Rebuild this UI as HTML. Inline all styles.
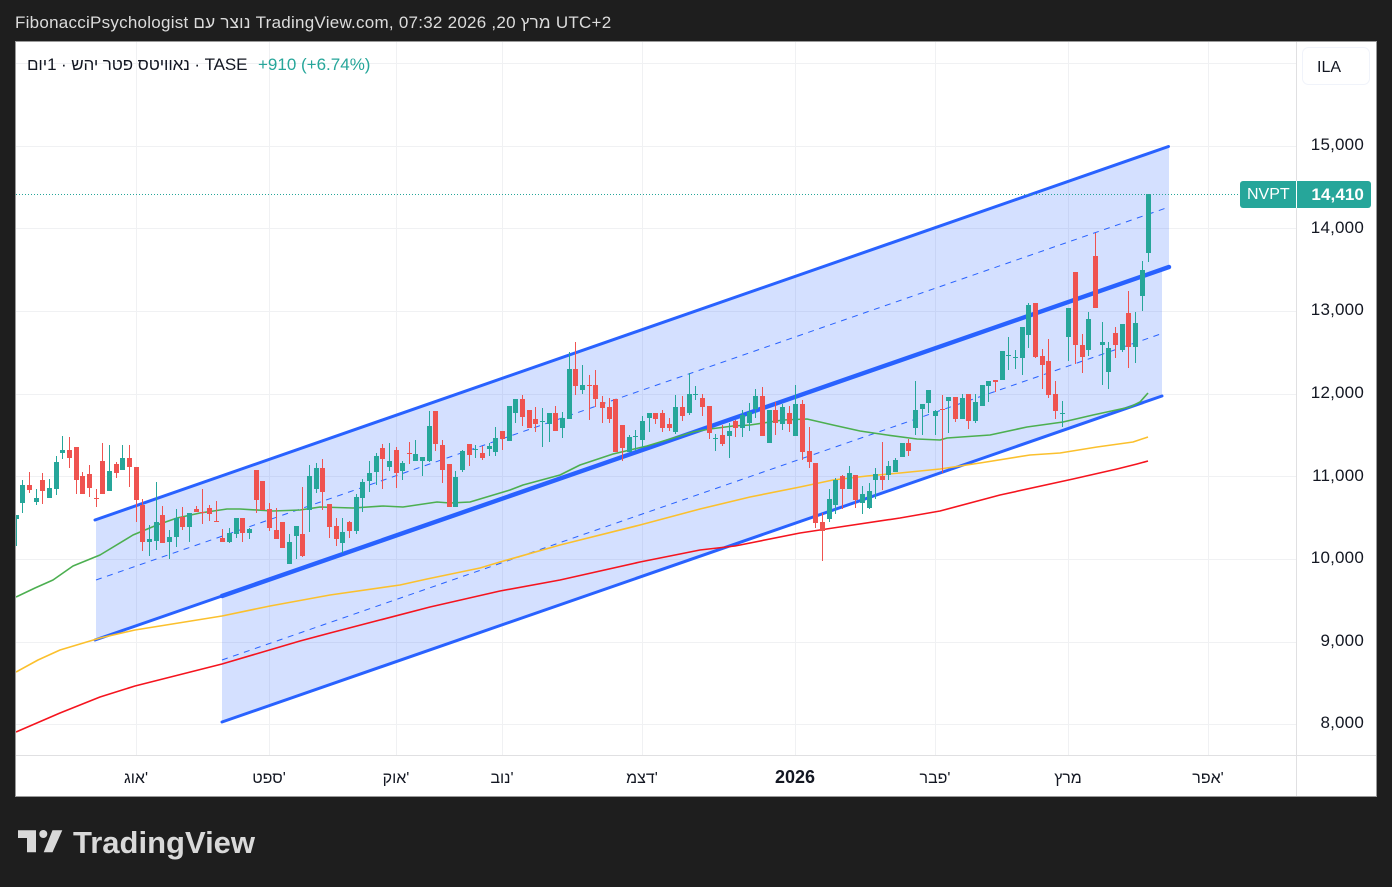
<!DOCTYPE html>
<html lang="he"><head><meta charset="utf-8"><title>NVPT</title>
<style>
html,body{margin:0;padding:0;background:#1e1e1e;width:1392px;height:887px;overflow:hidden}
body{position:relative;font-family:"Liberation Sans","Noto Sans CJK JP",sans-serif}
.t{position:absolute;white-space:pre;direction:ltr}
#chart{position:absolute;left:15px;top:41px;width:1362px;height:756px;background:#fff;box-sizing:border-box;border:1px solid #9a9a9a}
svg{position:absolute;left:0;top:0}
.p{position:absolute;right:28px;width:70px;text-align:right;font-size:17px;letter-spacing:.2px;color:#131722;line-height:18px}
.x{position:absolute;top:770px;width:80px;text-align:center;font-size:16px;color:#131722;line-height:18px;direction:ltr}
</style></head><body>
<div id="chart"></div>
<svg width="1392" height="887" viewBox="0 0 1392 887">
<defs><clipPath id="c"><rect x="16" y="42" width="1280" height="713"/></clipPath></defs>
<g stroke="#f0f1f3" stroke-width="1" shape-rendering="crispEdges" fill="none">
<path d="M16 63.5H1296M16 146.5H1296M16 228.5H1296M16 311.5H1296M16 394.5H1296M16 476.5H1296M16 559.5H1296M16 642.5H1296M16 724.5H1296"/>
<path d="M136.5 42V755M269.5 42V755M396.5 42V755M502.5 42V755M642.5 42V755M795.5 42V755M935.5 42V755M1068.5 42V755M1208.5 42V755"/>
</g>
<path d="M1296.5 42V796M16 755.5H1376" stroke="#e0e0e2" fill="none" shape-rendering="crispEdges"/>
<g clip-path="url(#c)">
<path d="M96 520L1169 147V267L96 640Z" fill="#2962ff" fill-opacity=".2"/>
<path d="M222 596L1162 270V396L222 722Z" fill="#2962ff" fill-opacity=".2"/>
<g fill="none" stroke="#2962ff">
<path d="M96 580L1169 207" stroke-width="1" stroke-dasharray="6 5.6"/>
<path d="M222 660L1162 333.5" stroke-width="1" stroke-dasharray="6 5.6"/>
<path d="M95 520L1168.5 146.5" stroke-width="3" stroke-linecap="round"/>
<path d="M95 640L222 596" stroke-width="3" stroke-linecap="round"/>
<path d="M222 596L1169 267" stroke-width="4.4" stroke-linecap="round"/>
<path d="M222 722L1162 396" stroke-width="3" stroke-linecap="round"/>
</g>
<g fill="none" stroke-width="1.6" stroke-linejoin="round">
<path stroke="#4caf50" d="M16 597L35 588L53 580L73 566L100 555L133 535L157 525L177 518L200 513L227 509L240 509L273 511L300 510L320 507L353 508L383 506L403 507L437 502L450 503L470 502L480 499L510 490L523 485L560 475L580 465L613 454L647 446L670 439L693 432L710 429L733 426L750 425L783 420L807 419L833 425L860 431L887 435L917 439L940 440L947 438L990 435L1027 427L1063 422L1093 415L1130 407L1140 402L1148 393"/>
<path stroke="#fbc02d" d="M16 672L38 660L60 650L100 638L135 630L222 616L270 606L330 595L400 585L427 579L480 568L500 562L560 545L640 525L700 509L750 497L800 487L833 480L867 476L900 473L940 469L980 463L1030 455L1060 453L1097 447L1133 442L1148 437"/>
<path stroke="#f5141e" d="M16 732L60 713L100 697L135 686L222 664L300 641L330 633L430 607L500 591L560 580L640 562L700 550L735 546L800 533L833 528L900 518L940 511L1000 495L1073 479L1117 469L1137 464L1148 461"/>
</g>
<g fill="none" shape-rendering="crispEdges">
<path stroke="#26a69a" stroke-width="1" d="M16.5 515V546M22.5 480V513M36.5 489V505M49.5 479V498M56.5 456V495M62.5 436V459M109.5 445V491M122.5 445V470M149.5 525V556M156.5 482V550M169.5 530V559M176.5 509V547M189.5 513V542M229.5 528V543M236.5 518V538M249.5 528V539M289.5 534V564M296.5 526V559M309.5 465V532M316.5 463V493M342.5 518V553M356.5 494V534M362.5 479V512M369.5 461V492M376.5 453V485M389.5 443V471M402.5 461V480M415.5 440V461M422.5 457V476M429.5 411V462M455.5 471V507M462.5 450V472M475.5 445V458M489.5 443V456M495.5 427V456M509.5 406V441M515.5 399V423M542.5 408V447M549.5 413V442M562.5 412V438M569.5 352V419M582.5 365V394M629.5 435V452M635.5 430V451M642.5 416V447M649.5 413V432M675.5 395V434M689.5 373V415M695.5 386V400M715.5 434V451M729.5 423V458M742.5 410V437M749.5 403V431M755.5 389V418M769.5 410V443M782.5 404V430M795.5 385V436M829.5 489V522M835.5 478V514M849.5 466V489M862.5 486V514M869.5 483V509M875.5 468V499M888.5 461V480M895.5 458V472M902.5 443V457M915.5 381V435M922.5 404V435M928.5 390V413M935.5 410V435M948.5 397V433M962.5 394V419M975.5 394V423M982.5 385V406M988.5 381V402M1002.5 351V380M1008.5 337V370M1015.5 350V369M1022.5 327V375M1028.5 303V348M1062.5 401V427M1068.5 308V361M1088.5 312V356M1102.5 322V385M1108.5 342V389M1122.5 324V352M1135.5 312V363M1142.5 261V311M1148.5 194V262"/>
<path stroke="#26a69a" stroke-width="5" d="M16.5 515V519M22.5 485V503M36.5 498V502M49.5 488V498M56.5 462V489M62.5 450V453M109.5 471V491M122.5 458V470M149.5 539V542M156.5 522V541M169.5 537V542M176.5 518V537M189.5 513V527M229.5 533V542M236.5 518V534M249.5 529V533M289.5 542V564M296.5 526V536M309.5 476V510M316.5 468V489M342.5 532V543M356.5 497V531M362.5 482V498M369.5 473V481M376.5 456V472M389.5 461V467M402.5 463V471M415.5 454V461M422.5 457V461M429.5 426V461M455.5 477V507M462.5 451V470M475.5 449V450M489.5 446V449M495.5 438V452M509.5 406V441M515.5 399V413M542.5 421V422M549.5 413V424M562.5 418V428M569.5 369V419M582.5 385V390M629.5 437V452M635.5 436V437M642.5 421V440M649.5 413V418M675.5 407V432M689.5 394V413M695.5 394V395M715.5 438V439M729.5 431V436M742.5 415V428M749.5 412V423M755.5 396V409M769.5 410V443M782.5 407V424M795.5 404V436M829.5 499V519M835.5 480V505M849.5 473V489M862.5 494V503M869.5 491V508M875.5 474V480M888.5 466V475M895.5 460V472M902.5 443V457M915.5 410V428M922.5 404V409M928.5 390V403M935.5 411V416M948.5 397V401M962.5 398V419M975.5 402V421M982.5 385V406M988.5 381V386M1002.5 351V380M1008.5 355V356M1015.5 357V358M1022.5 327V358M1028.5 305V335M1062.5 413V414M1068.5 308V337M1088.5 319V350M1102.5 342V345M1108.5 348V372M1122.5 324V350M1135.5 323V347M1142.5 270V296M1148.5 194V253"/>
<path stroke="#ef5350" stroke-width="1" d="M29.5 472V493M42.5 473V504M69.5 437V468M76.5 447V494M82.5 472V494M89.5 465V497M96.5 489V507M102.5 443V494M116.5 462V478M129.5 445V487M136.5 467V522M142.5 499V551M162.5 506V543M182.5 507V530M196.5 506V512M202.5 489V524M209.5 505V521M216.5 501V522M222.5 529V542M242.5 518V542M256.5 470V513M262.5 481V510M269.5 503V531M276.5 508V539M282.5 522V548M302.5 487V557M322.5 459V510M329.5 504V538M336.5 518V546M349.5 521V538M382.5 444V489M396.5 447V488M409.5 442V464M435.5 411V451M442.5 440V483M449.5 464V507M469.5 444V466M482.5 446V460M502.5 431V450M522.5 395V426M529.5 410V428M535.5 407V432M555.5 406V431M575.5 342V395M589.5 375V420M595.5 370V407M602.5 396V423M609.5 398V423M615.5 399V452M622.5 425V461M655.5 413V424M662.5 410V432M669.5 418V431M682.5 396V421M702.5 394V416M709.5 406V439M722.5 425V446M735.5 420V437M762.5 387V436M775.5 402V435M789.5 406V432M802.5 400V460M809.5 427V468M815.5 463V528M822.5 513V561M842.5 475V509M855.5 475V508M882.5 442V490M908.5 439V456M942.5 395V473M955.5 397V422M968.5 394V429M995.5 380V392M1035.5 303V358M1042.5 349V389M1048.5 339V398M1055.5 381V419M1075.5 272V364M1082.5 334V373M1095.5 233V308M1115.5 327V358M1128.5 291V368"/>
<path stroke="#ef5350" stroke-width="5" d="M29.5 485V490M42.5 480V491M69.5 450V458M76.5 447V480M82.5 476V494M89.5 474V488M96.5 498V499M102.5 461V494M116.5 464V473M129.5 458V467M136.5 467V500M142.5 505V542M162.5 515V543M182.5 517V527M196.5 509V512M202.5 512V513M209.5 508V514M216.5 521V522M222.5 538V542M242.5 518V533M256.5 470V500M262.5 481V510M269.5 509V528M276.5 530V539M282.5 522V548M302.5 534V556M322.5 468V492M329.5 504V527M336.5 526V539M349.5 522V531M382.5 448V459M396.5 450V473M409.5 453V454M435.5 411V444M442.5 445V470M449.5 464V507M469.5 444V455M482.5 453V458M502.5 431V439M522.5 399V417M529.5 410V428M535.5 419V424M555.5 413V431M575.5 369V386M589.5 385V386M595.5 385V399M602.5 402V408M609.5 407V419M615.5 399V452M622.5 425V448M655.5 413V419M662.5 413V428M669.5 424V428M682.5 407V416M702.5 398V407M709.5 406V433M722.5 435V444M735.5 421V428M762.5 396V436M775.5 410V423M789.5 413V424M802.5 404V452M809.5 451V462M815.5 463V523M822.5 522V531M842.5 476V489M855.5 475V500M882.5 476V480M908.5 443V451M942.5 409V410M955.5 397V419M968.5 394V421M995.5 380V382M1035.5 303V357M1042.5 356V365M1048.5 361V395M1055.5 394V411M1075.5 272V345M1082.5 345V357M1095.5 256V308M1115.5 333V345M1128.5 313V347"/>
</g>
<path d="M16 194.5H1240" stroke="#26a69a" stroke-width="1" stroke-dasharray="1 2" fill="none" shape-rendering="crispEdges"/>
</g>
<rect x="1240" y="181" width="131" height="27" rx="3" fill="#26a69a"/>
<rect x="1296" y="181" width="1" height="27" fill="#fff"/>
<rect x="1302.5" y="47.5" width="67" height="37" rx="6" fill="#fff" stroke="#f0f3fa"/>
<g fill="#d9d9d9">
<path d="M18 830.3H36V852.3H27V838H18Z"/>
<circle cx="43.3" cy="834" r="4"/>
<path d="M52.5 830.3H62.3L52.5 852.3H43.7Z"/>
</g>
</svg>
<div class="t" style="left:15px;top:14px;font-size:17px;line-height:18px;color:#dcdcdc;letter-spacing:.25px">FibonacciPsychologist נוצר עם TradingView.com, מרץ 20, 2026 07:32 UTC+2</div>
<div class="t" style="left:27px;top:56px;font-size:17px;line-height:18px;color:#131722;letter-spacing:-.1px">נאוויטס פטר יהש · 1יום · TASE</div>
<div class="t" style="left:258px;top:56px;font-size:17px;line-height:18px;color:#26a69a">+910 (+6.74%)</div>
<div class="t" style="left:1317px;top:59px;font-size:16px;line-height:18px;color:#131722">ILA</div>
<div class="p" style="top:136px">15,000</div>
<div class="p" style="top:219px">14,000</div>
<div class="p" style="top:301px">13,000</div>
<div class="p" style="top:384px">12,000</div>
<div class="p" style="top:467px">11,000</div>
<div class="p" style="top:549px">10,000</div>
<div class="p" style="top:632px">9,000</div>
<div class="p" style="top:714px">8,000</div>
<div class="t" style="left:1247px;top:186px;font-size:16px;line-height:18px;color:#fff">NVPT</div>
<div class="p" style="top:186px;color:#fff;font-weight:700;letter-spacing:.1px">14,410</div>
<div class="x" style="left:96px">אוג'</div>
<div class="x" style="left:229px">ספט'</div>
<div class="x" style="left:356px">אוק'</div>
<div class="x" style="left:462px">נוב'</div>
<div class="x" style="left:602px">דצמ'</div>
<div class="x" style="left:755px;top:768px;font-weight:700;font-size:18px">2026</div>
<div class="x" style="left:895px">פבר'</div>
<div class="x" style="left:1028px">מרץ</div>
<div class="x" style="left:1168px">אפר'</div>
<div class="t" style="left:73px;top:824px;font-size:31px;line-height:37px;font-weight:700;color:#d9d9d9">TradingView</div>
</body></html>
